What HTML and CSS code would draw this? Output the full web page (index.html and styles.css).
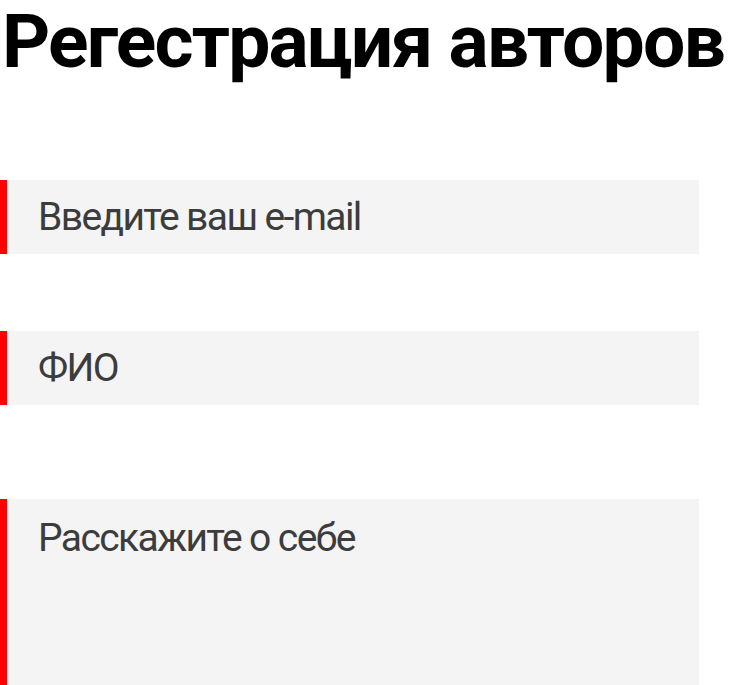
FILE: index.html
```html
<!DOCTYPE html>
<html lang="ru">
<head>
<meta charset="utf-8">
<title>Регестрация авторов</title>
<link rel="stylesheet" href="styles.css">
</head>
<body>
<h1 class="title">Регестрация авторов</h1>
<form class="form">
  <input class="field" type="email" placeholder="Введите ваш e-mail">
  <input class="field field-name" type="text" placeholder="ФИО">
  <textarea class="field field-about" placeholder="Расскажите о себе"></textarea>
</form>
</body>
</html>
```
FILE: styles.css
```css
html, body {
  margin: 0;
  padding: 0;
  background: #fff;
}
body {
  font-family: Roboto, "Noto Sans", sans-serif;
  overflow: hidden;
}
.title {
  margin: 0;
  padding-left: 2px;
  font-size: 75px;
  font-weight: 700;
  line-height: 83px;
  letter-spacing: -1.8px;
  white-space: nowrap;
  color: #000;
}
.form {
  display: flex;
  flex-direction: column;
  align-items: flex-start;
  padding-top: 97px;
}
.field {
  box-sizing: border-box;
  width: 699px;
  height: 74px;
  margin: 0;
  padding: 14px 20px 14px 31px;
  border: none;
  border-left: 7px solid #ff0000;
  background: #f4f4f4;
  font-family: Roboto, sans-serif;
  font-size: 39px;
  line-height: 46px;
  letter-spacing: -1.6px;
  color: #3c3c3c;
  outline: none;
  resize: none;
}
.field::placeholder {
  color: #3c3c3c;
  opacity: 1;
}
.field-name {
  margin-top: 77px;
}
.field-about {
  margin-top: 94px;
  height: 240px;
  padding-top: 16px;
}
```
